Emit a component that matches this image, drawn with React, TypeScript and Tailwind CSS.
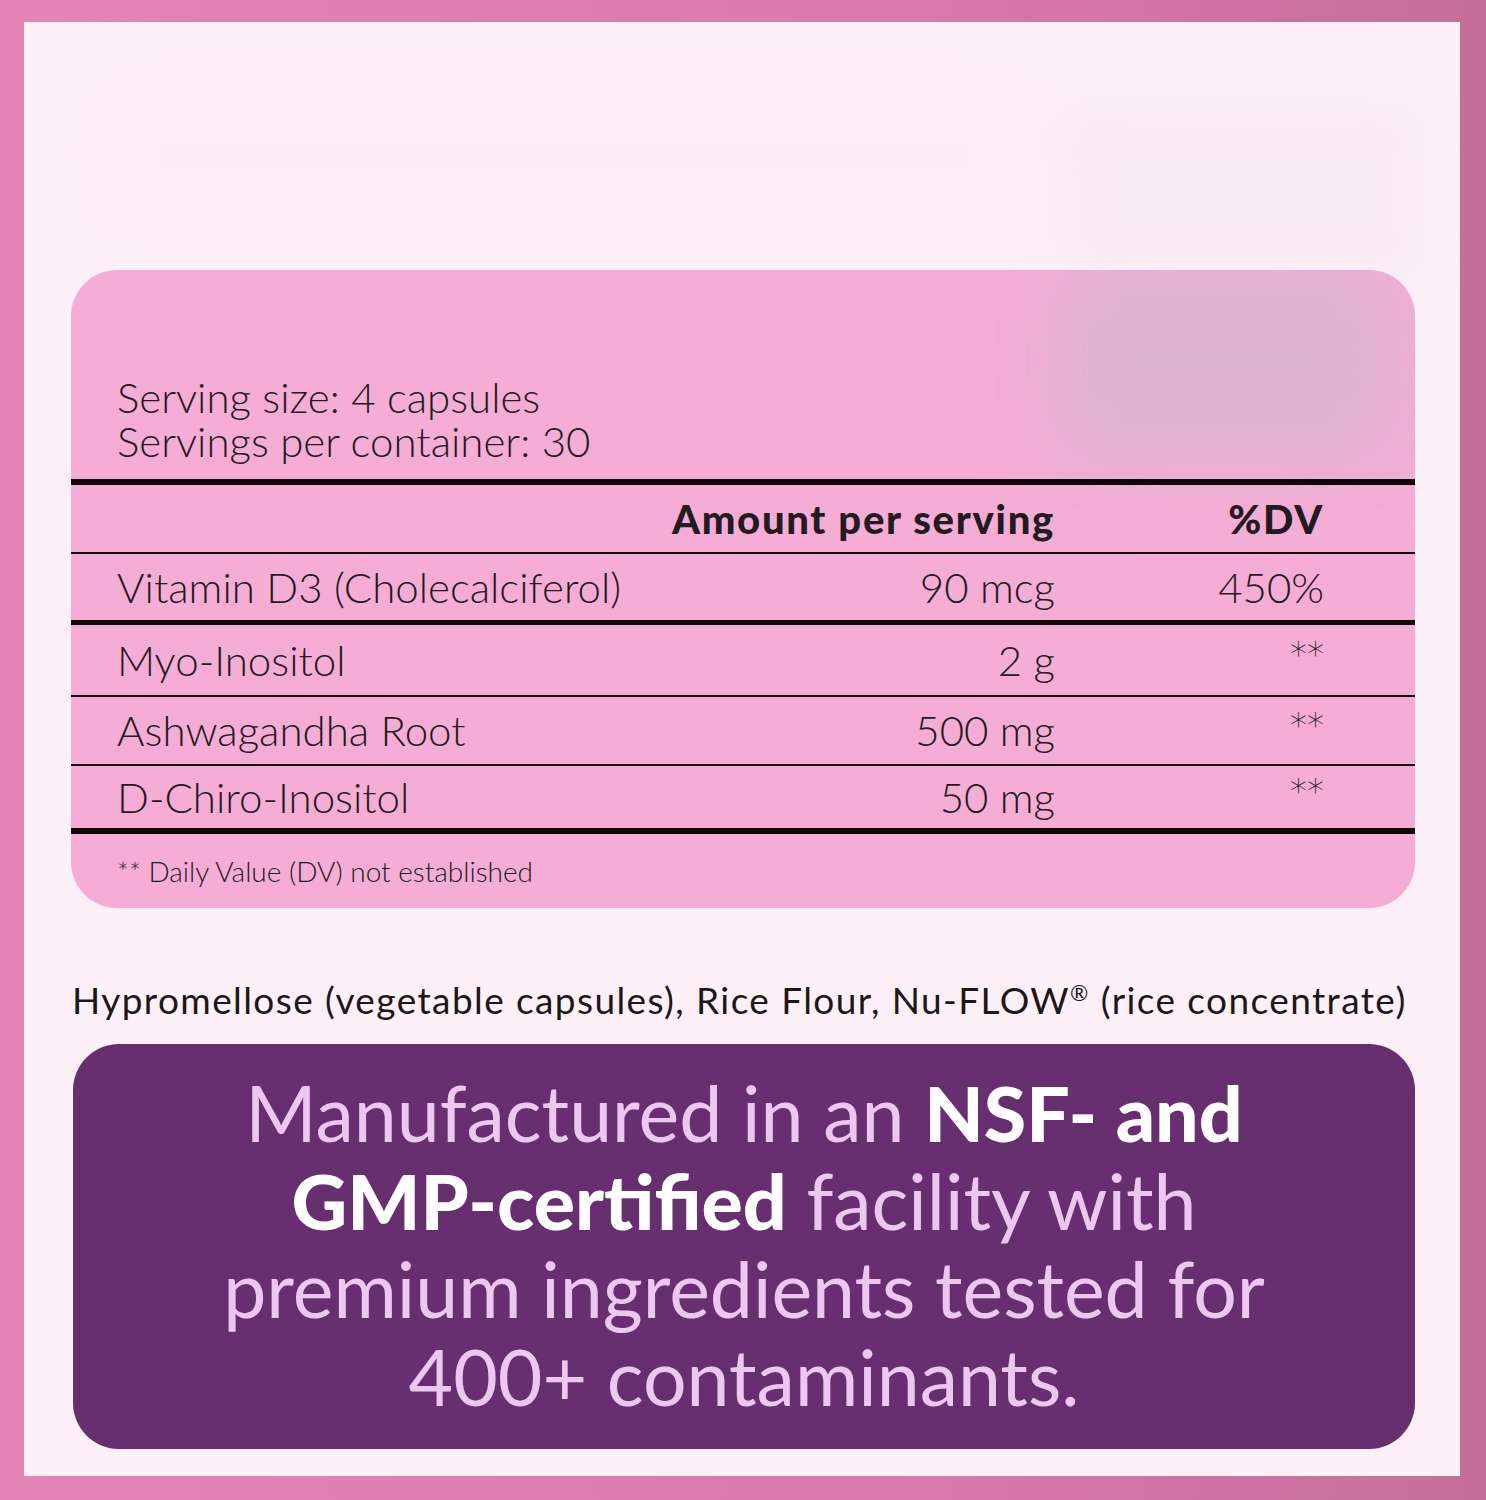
import React from "react";

const rows = [
  { name: "Vitamin D3 (Cholecalciferol)", amt: "90 mcg", dv: "450%", h: "h-[66px]", line: "h-[5px]" },
  { name: "Myo-Inositol", amt: "2 g", dv: "**", h: "h-[70px]", line: "h-[2px]" },
  { name: "Ashwagandha Root", amt: "500 mg", dv: "**", h: "h-[67px]", line: "h-[2px]" },
  { name: "D-Chiro-Inositol", amt: "50 mg", dv: "**", h: "h-[62px]", line: "h-[6px]" },
];

export default function App() {
  return (
    <div
      className="w-[1486px] h-[1500px] pt-[22px] pl-[24px] pr-[26px] pb-[24px] bg-[linear-gradient(90deg,#e585b5_0%,#d97aab_60%,#c66e9a_100%)]"
      style={{ fontFamily: "Lato, 'Noto Sans', sans-serif" }}
    >
      <div className="relative w-full h-full bg-[#fdf1f7] flex flex-col overflow-hidden">
        {/* faint blurred patches (removed logo areas) */}
        <div className="absolute left-[40px] top-[30px] w-[1000px] h-[210px] bg-[#fcecf3] blur-2xl opacity-60 rounded-[30px]" />
        <div className="absolute left-[1030px] top-[70px] w-[380px] h-[200px] bg-[#f8e8f0] blur-xl opacity-60 rounded-[30px]" />

        {/* Supplement facts box */}
        <div className="relative mt-[248px] ml-[47px] w-[1344px] h-[638px] bg-[#f5add5] rounded-[46px] overflow-hidden text-[#241a22]">
          <div className="absolute right-[20px] top-[-10px] w-[340px] h-[200px] bg-[#d9b4cf] blur-2xl opacity-90 rounded-[40px]" />
          <div className="relative pt-[105px] pl-[46px] text-[42px] leading-[44px] font-light">
            <div className="h-[44px]">Serving size: 4 capsules</div>
            <div className="h-[44px]">Servings per container: 30</div>
          </div>
          <div className="relative mt-[16px] h-[6px] bg-[#0d0508]" />
          <div className="relative flex items-center h-[67px] pr-[91px] text-[40px] font-black tracking-[1.7px]">
            <div className="flex-1" />
            <div className="text-right">Amount per serving</div>
            <div className="w-[269px] text-right">%DV</div>
          </div>
          <div className="relative h-[2px] bg-[#0d0508]" />
          {rows.map((r) => (
            <React.Fragment key={r.name}>
              <div className={`relative flex items-center ${r.h} pl-[46px] pr-[91px] text-[42px] font-light`}>
                <div className="flex-1">{r.name}</div>
                <div className="text-right">{r.amt}</div>
                {r.dv === "**" ? (
                  <div
                    className="w-[269px] text-right text-[34px] leading-none -translate-y-[6px] tracking-[0px]"
                    style={{ fontFamily: "'DejaVu Sans', sans-serif" }}
                  >
                    **
                  </div>
                ) : (
                  <div className="w-[269px] text-right">{r.dv}</div>
                )}
              </div>
              <div className={`relative ${r.line} bg-[#0d0508]`} />
            </React.Fragment>
          ))}
          <div className="relative flex items-center h-[74px] pl-[46px] text-[28px] font-light">
            ** Daily Value (DV) not established
          </div>
        </div>

        <div className="mt-[72px] ml-[48px] h-[40px] flex items-center text-[37px] leading-[40px] tracking-[1.4px] text-[#1c1719] whitespace-nowrap">
          <span>Hypromellose (vegetable capsules), Rice Flour, Nu-FLOW</span>
          <span className="text-[22px] leading-none self-start mt-[2px]">®</span>
          <span>&nbsp;(rice concentrate)</span>
        </div>

        <div className="mt-[24px] ml-[49px] w-[1342px] h-[405px] bg-[#672f70] rounded-[46px] flex items-center justify-center">
          <div className="text-center text-[77px] leading-[88px] text-[#ecc8f1] -translate-y-[3px]">
            <div>
              Manufactured in an <span className="font-black text-white">NSF- and</span>
            </div>
            <div>
              <span className="font-black text-white">GMP-certified</span> facility with
            </div>
            <div>premium ingredients tested for</div>
            <div>400+ contaminants.</div>
          </div>
        </div>
      </div>
    </div>
  );
}
